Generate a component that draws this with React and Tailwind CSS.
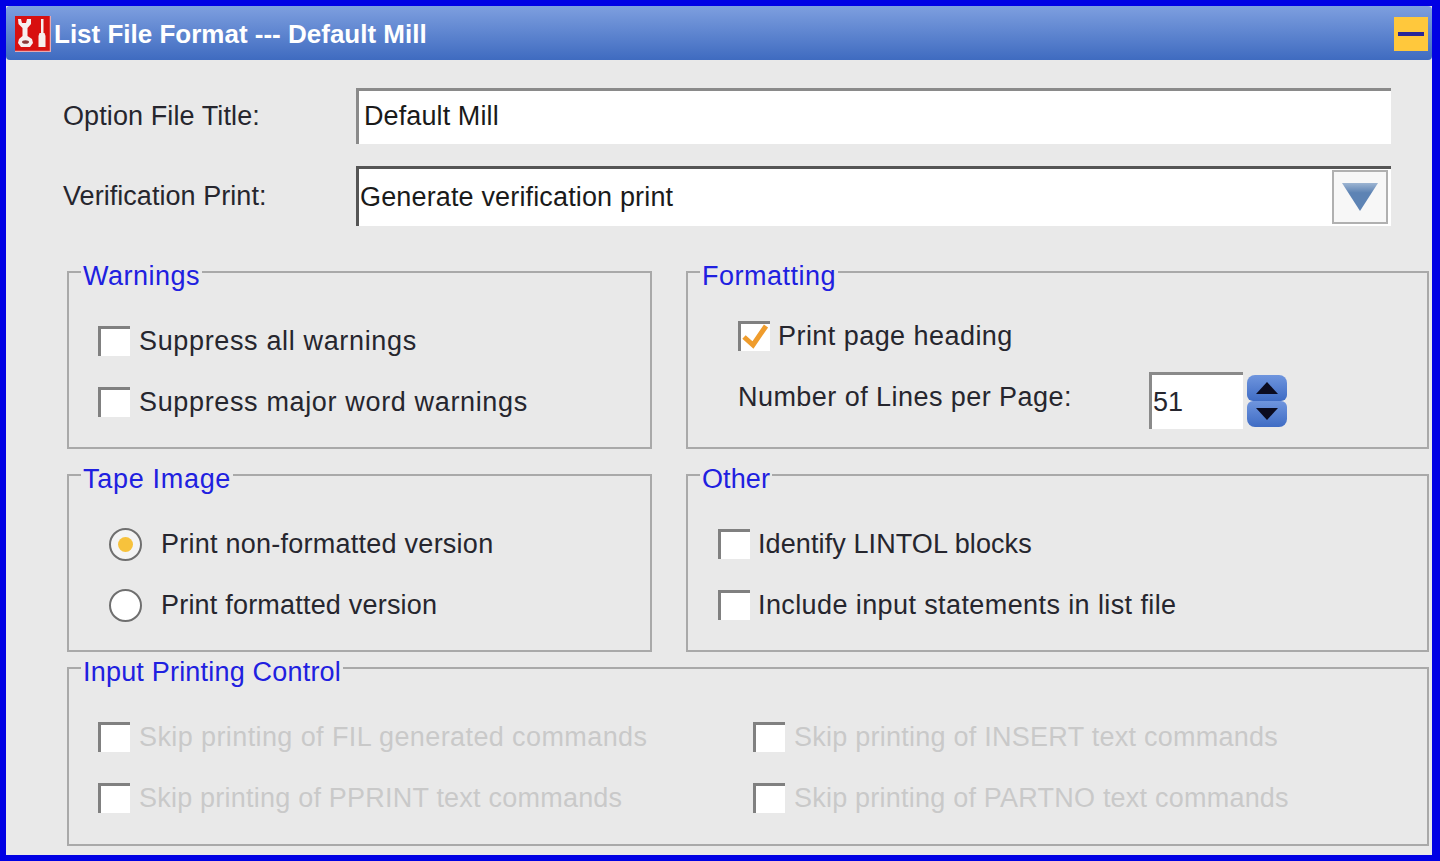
const font = { fontFamily: '"Liberation Sans", Arial, sans-serif' }

function CheckBox({ checked }) {
  return (
    <span className="relative block w-[32px] h-[30px] shrink-0 bg-white border-t-[3px] border-l-[3px] border-[#808080]">
      {checked && (
        <svg viewBox="0 0 30 28" className="absolute -left-[2px] -top-[2px] w-[30px] h-[28px]">
          <path d="M5 15 L14 23 L27 4" fill="none" stroke="#ef9c2c" strokeWidth="5" />
        </svg>
      )}
    </span>
  )
}

function Check({ label, checked, disabled, className = '', gap = 'gap-[9px]' }) {
  return (
    <div className={`flex items-center h-[30px] whitespace-nowrap ${gap} ${disabled ? 'text-[#c9c9c9]' : 'text-[#26262e]'} ${className}`}>
      <CheckBox checked={checked} />
      <span>{label}</span>
    </div>
  )
}

function Radio({ label, selected, className = '' }) {
  return (
    <div className={`flex items-center gap-[19px] h-[32px] text-[#26262e] whitespace-nowrap ${className}`}>
      <span className={`flex items-center justify-center w-[33px] h-[33px] rounded-full border-[2px] border-[#6f6f6f] ${selected ? 'bg-[#f4f4f4]' : 'bg-white'}`}>
        {selected && <span className="block w-[15px] h-[15px] rounded-full bg-[#f7c23c]" />}
      </span>
      <span>{label}</span>
    </div>
  )
}

function Group({ title, className = '', legendClass = 'tracking-[0.5px]', children }) {
  return (
    <fieldset className={`border-2 border-[#a9a9a9] min-w-0 ${className}`}>
      <legend className={`ml-[12px] px-[2px] h-[24px] leading-[32px] text-[#2020e0] ${legendClass}`}>{title}</legend>
      {children}
    </fieldset>
  )
}

function TitleIcon() {
  return (
    <svg viewBox="0 0 36 36" className="w-[36px] h-[36px] shrink-0">
      <rect x="0" y="0" width="36" height="36" fill="#d81010" />
      <path d="M35.5 0 V35.5 H0" fill="none" stroke="#e8a8b0" strokeWidth="1.5" />
      {/* wrench */}
      <path d="M3 3 L6 3 L7 7 L11 7 L12 3 L16 3 L16 8 L12.5 12 L12.5 20 L17 23 L18 27 L15 31 L6 31 L3 27 L4 23 L7.5 20 L7.5 12 L3.5 8 Z" fill="#f6eeee" />
      <ellipse cx="10.5" cy="26" rx="3.5" ry="1.8" fill="#8a3a3a" />
      {/* screwdriver */}
      <rect x="26" y="3" width="2.5" height="14" fill="#f6eeee" />
      <path d="M24.5 17 L29.5 17 L30.5 20 L30.5 31 L23.5 31 L23.5 20 Z" fill="#f6eeee" />
    </svg>
  )
}

function SpinButton({ up }) {
  return (
    <div className={`flex items-center justify-center w-[40px] h-[26px] bg-gradient-to-b from-[#6f95de] to-[#3f6cc4] ${up ? 'rounded-t-[8px] rounded-b-[6px]' : 'rounded-b-[8px] rounded-t-[6px]'}`}>
      <svg viewBox="0 0 22 12" className="w-[22px] h-[12px]">
        <path d={up ? 'M11 0 L22 12 L0 12 Z' : 'M0 0 L22 0 L11 12 Z'} fill="#0b0b20" />
      </svg>
    </div>
  )
}

export default function App() {
  return (
    <div style={font} className="w-[1440px] h-[861px] overflow-hidden bg-[#0000e4] pt-[6px] pl-[6px] pr-[8px] pb-[6px] text-[27px] leading-[32px]">
      <div className="h-full bg-[#e9e9e9] flex flex-col">
        <div className="h-[54px] shrink-0 flex items-center pl-[9px] pr-[4px] pt-[1px] rounded-[4px] bg-gradient-to-b from-[#7e9fdf] to-[#3f6bc0]">
          <TitleIcon />
          <span className="ml-[3px] flex-1 text-white font-bold text-[26px] whitespace-nowrap">List File Format --- Default Mill</span>
          <div className="flex items-center justify-center w-[34px] h-[34px] bg-[#ffc83c]">
            <span className="block w-[26px] h-[4px] bg-[#27279a]" />
          </div>
        </div>

        <div className="pl-[61px]">
          <div className="flex items-center h-[56px] mt-[28px] -ml-[4px]">
            <span className="w-[293px] text-[#26262e] tracking-[0.1px]">Option File Title:</span>
            <div className="w-[1035px] h-full flex items-center pl-[5px] pb-[4px] bg-white border-t-[3px] border-l-[3px] border-[#8a8a8a] text-[#1a1a1a] tracking-[0.1px]">Default Mill</div>
          </div>
          <div className="flex items-center h-[60px] mt-[22px] -ml-[4px]">
            <span className="w-[293px] text-[#26262e] tracking-[0.05px]">Verification Print:</span>
            <div className="relative w-[1035px] h-full flex items-center pl-[1px] pb-[1px] bg-white border-t-[3px] border-l-[3px] border-[#555555] text-[#1a1a1a] tracking-[0.15px]">
              Generate verification print
              <div className="absolute right-[3px] top-[1px] flex items-center justify-center w-[56px] h-[54px] border-2 border-[#b0b0b0] bg-[#f7f7f7]">
                <svg viewBox="0 0 36 28" className="w-[36px] h-[28px]">
                  <defs>
                    <linearGradient id="arrow" x1="0" y1="0" x2="0" y2="1">
                      <stop offset="0" stopColor="#9db5d2" />
                      <stop offset="0.35" stopColor="#5d83b4" />
                    </linearGradient>
                  </defs>
                  <path d="M0 0 L36 0 L18 28 Z" fill="url(#arrow)" />
                </svg>
              </div>
            </div>
          </div>

          <div className="grid grid-cols-[585px_743px] gap-x-[34px] mt-[34px]">
            <Group title="Warnings" className="h-[189px]">
              <Check label="Suppress all warnings" className="ml-[29px] mt-[42px] tracking-[0.65px]" />
              <Check label="Suppress major word warnings" className="ml-[29px] mt-[31px] tracking-[0.65px]" />
            </Group>
            <Group title="Formatting" className="h-[189px]">
              <Check label="Print page heading" checked gap="gap-[8px]" className="ml-[50px] mt-[37px] tracking-[0.45px]" />
              <div className="flex items-center ml-[50px] mt-[21px] text-[#26262e]">
                <span className="w-[411px] -mt-[8px] whitespace-nowrap tracking-[0.45px]">Number of Lines per Page:</span>
                <div className="w-[94px] h-[57px] flex items-center pl-[1px] bg-white border-t-[3px] border-l-[3px] border-[#8a8a8a]">51</div>
                <div className="ml-[4px] flex flex-col">
                  <SpinButton up />
                  <SpinButton />
                </div>
              </div>
            </Group>

            <Group title="Tape Image" legendClass="tracking-[0.7px]" className="h-[189px] mt-[14px]">
              <Radio label="Print non-formatted version" selected className="ml-[40px] mt-[41px] tracking-[0.25px]" />
              <Radio label="Print formatted version" className="ml-[40px] mt-[29px] tracking-[0.2px]" />
            </Group>
            <Group title="Other" legendClass="tracking-[0.1px]" className="h-[189px] mt-[14px]">
              <Check label="Identify LINTOL blocks" gap="gap-[8px]" className="ml-[30px] mt-[42px] tracking-[0.1px]" />
              <Check label="Include input statements in list file" gap="gap-[8px]" className="ml-[30px] mt-[31px] tracking-[0.4px]" />
            </Group>

            <Group title="Input Printing Control" legendClass="tracking-[0.2px]" className="col-span-2 h-[190px] mt-[4px]">
              <div className="grid grid-cols-[655px_1fr] ml-[29px] mt-[42px] gap-y-[31px]">
                <Check disabled label="Skip printing of FIL generated commands" className="tracking-[0.4px]" />
                <Check disabled label="Skip printing of INSERT text commands" className="tracking-[0.25px]" />
                <Check disabled label="Skip printing of PPRINT text commands" className="tracking-[0.22px]" />
                <Check disabled label="Skip printing of PARTNO text commands" className="tracking-[0.22px]" />
              </div>
            </Group>
          </div>
        </div>
      </div>
    </div>
  )
}
